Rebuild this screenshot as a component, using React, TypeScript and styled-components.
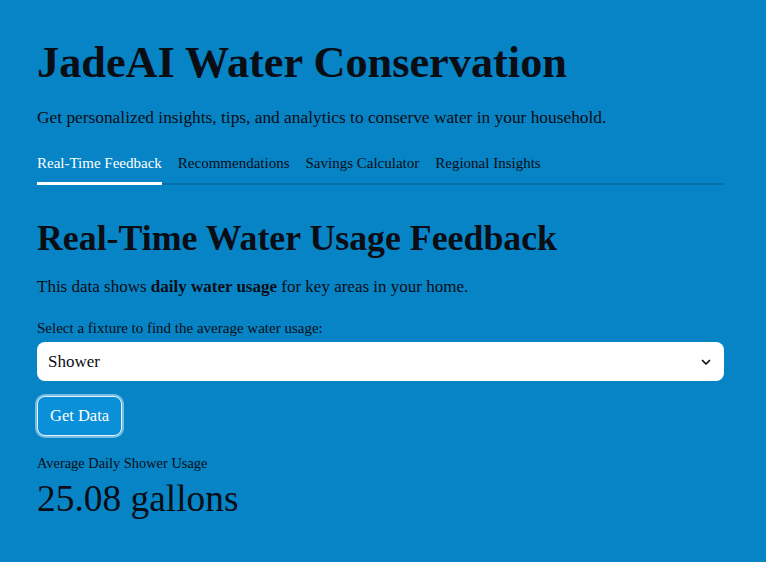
import React from "react";
import styled, { createGlobalStyle } from "styled-components";

const Global = createGlobalStyle`
  html, body { margin: 0; padding: 0; background: #0784c6; }
  body { font-family: "Liberation Serif", "DejaVu Serif", serif; color: #0a0d14; }
  * { box-sizing: border-box; }
`;

const Page = styled.main`
  width: 766px;
  height: 562px;
  background: #0784c6;
  padding: 36px 42px 0 37px;
  display: flex;
  flex-direction: column;
  overflow: hidden;
`;

const Title = styled.h1`
  margin: 0;
  font-size: 44.3px;
  line-height: 54px;
  font-weight: 700;
`;

const Subtitle = styled.p`
  margin: 16px 0 0;
  font-size: 17.35px;
  line-height: 24px;
`;

const TabList = styled.div`
  margin-top: 23px;
  display: flex;
  gap: 16px;
  border-bottom: 2px solid #0670a9;
`;

const Tab = styled.div<{ $active?: boolean }>`
  font-size: 15px;
  line-height: 20px;
  padding-bottom: 9px;
  margin-bottom: -2px;
  color: ${(p) => (p.$active ? "#ffffff" : "#0a0d14")};
  border-bottom: 3px solid ${(p) => (p.$active ? "#ffffff" : "transparent")};
`;

const Heading = styled.h2`
  margin: 31px 0 0;
  font-size: 35.8px;
  line-height: 44px;
  font-weight: 600;
`;

const Text = styled.p`
  margin: 15px 0 0;
  font-size: 17px;
  line-height: 24px;
  b { font-weight: 700; }
`;

const Label = styled.div`
  margin-top: 19px;
  font-size: 15px;
  line-height: 20px;
`;

const Select = styled.div`
  margin-top: 4px;
  height: 39px;
  background: #ffffff;
  border-radius: 8px;
  display: flex;
  align-items: center;
  justify-content: space-between;
  padding: 0 12px 0 11px;
  font-size: 17px;
`;

const Button = styled.button`
  margin-top: 15px;
  align-self: flex-start;
  height: 40px;
  padding: 0 12px;
  border-radius: 8px;
  background: #0a90d8;
  border: 1px solid #e6f4fb;
  box-shadow: 0 0 0 2px #74bde4;
  color: #ffffff;
  font-family: "Liberation Serif", serif;
  font-size: 16.5px;
`;

const MetricLabel = styled.div`
  margin-top: 17px;
  font-size: 14.4px;
  line-height: 20px;
`;

const MetricValue = styled.div`
  margin-top: 3px;
  font-size: 37.4px;
  line-height: 46px;
`;

export default function App() {
  return (
    <Page>
      <Global />
      <Title>JadeAI Water Conservation</Title>
      <Subtitle>Get personalized insights, tips, and analytics to conserve water in your household.</Subtitle>
      <TabList>
        <Tab $active>Real-Time Feedback</Tab>
        <Tab>Recommendations</Tab>
        <Tab>Savings Calculator</Tab>
        <Tab>Regional Insights</Tab>
      </TabList>
      <Heading>Real-Time Water Usage Feedback</Heading>
      <Text>
        This data shows <b>daily water usage</b> for key areas in your home.
      </Text>
      <Label>Select a fixture to find the average water usage:</Label>
      <Select>
        <span>Shower</span>
        <svg width="12" height="12" viewBox="0 0 24 24" fill="none" stroke="#0a0d14" strokeWidth="3.5" strokeLinecap="round" strokeLinejoin="round">
          <path d="M5 9l7 7 7-7" />
        </svg>
      </Select>
      <Button>Get Data</Button>
      <MetricLabel>Average Daily Shower Usage</MetricLabel>
      <MetricValue>25.08 gallons</MetricValue>
    </Page>
  );
}
